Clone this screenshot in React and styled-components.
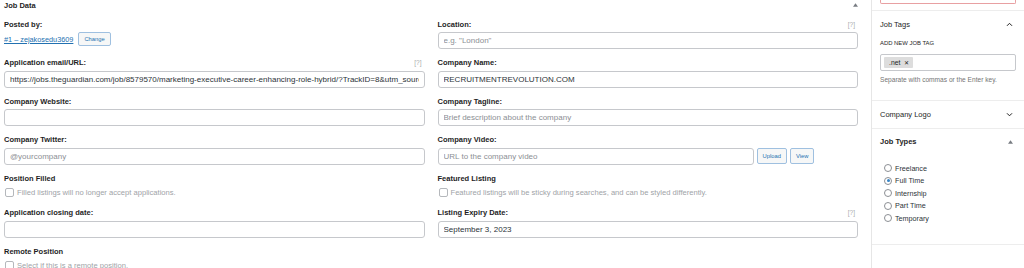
import styled, { createGlobalStyle } from "styled-components";

const GlobalStyle = createGlobalStyle`
  html, body {
    margin: 0;
    padding: 0;
    background: #ffffff;
    font-family: "Liberation Sans", Arial, sans-serif;
    color: #1e1e1e;
  }
  * { box-sizing: border-box; }
`;

const leftFields = [
  { kind: "posted", label: "Posted by:" },
  { kind: "input", label: "Application email/URL:", help: true, value: "https://jobs.theguardian.com/job/8579570/marketing-executive-career-enhancing-role-hybrid/?TrackID=8&utm_source=theguardian" },
  { kind: "input", label: "Company Website:" },
  { kind: "input", label: "Company Twitter:", placeholder: "@yourcompany" },
  { kind: "check", label: "Position Filled", text: "Filled listings will no longer accept applications." },
  { kind: "input", label: "Application closing date:" },
  { kind: "check", label: "Remote Position", text: "Select if this is a remote position." },
];

const rightFields = [
  { kind: "input", label: "Location:", help: true, placeholder: "e.g. \"London\"" },
  { kind: "input", label: "Company Name:", value: "RECRUITMENTREVOLUTION.COM" },
  { kind: "input", label: "Company Tagline:", placeholder: "Brief description about the company" },
  { kind: "video", label: "Company Video:", placeholder: "URL to the company video" },
  { kind: "check", label: "Featured Listing", text: "Featured listings will be sticky during searches, and can be styled differently." },
  { kind: "input", label: "Listing Expiry Date:", help: true, value: "September 3, 2023" },
];

// interleave so both columns share grid rows
const gridFields = [];
for (let i = 0; i < leftFields.length; i++) {
  gridFields.push({ ...leftFields[i], col: 1 });
  if (rightFields[i]) gridFields.push({ ...rightFields[i], col: 2 });
}

const jobTypes = [
  { name: "Freelance" },
  { name: "Full Time", checked: true },
  { name: "Internship" },
  { name: "Part Time" },
  { name: "Temporary" },
];

function Field({ field }) {
  return (
    <FieldBox $col={field.col}>
      <LabelRow>
        <Label>{field.label}</Label>
        {field.help && <Help>[?]</Help>}
      </LabelRow>
      {field.kind === "input" && (
        <TextInput readOnly value={field.value || ""} placeholder={field.placeholder || ""} />
      )}
      {field.kind === "posted" && (
        <ControlRow>
          <UserLink href="#">#1 – zejakosedu3609</UserLink>
          <SmallButton>Change</SmallButton>
        </ControlRow>
      )}
      {field.kind === "video" && (
        <ControlRow>
          <TextInput readOnly value="" placeholder={field.placeholder} $width="316px" />
          <SmallButton $tall>Upload</SmallButton>
          <SmallButton $tall>View</SmallButton>
        </ControlRow>
      )}
      {field.kind === "check" && (
        <CheckRow>
          <CheckBox />
          <CheckText>{field.text}</CheckText>
        </CheckRow>
      )}
    </FieldBox>
  );
}

const Caret = () => (
  <svg width="5" height="4" viewBox="0 0 5 4">
    <path d="M2.5 0.3 L5 3.7 L0 3.7 Z" fill="#787c82" />
  </svg>
);

const Chevron = ({ up }) => (
  <svg width="7" height="5" viewBox="0 0 7 5">
    <path d={up ? "M1 3.8 L3.5 1.3 L6 3.8" : "M1 1.3 L3.5 3.8 L6 1.3"} fill="none" stroke="#1e1e1e" strokeWidth="1" />
  </svg>
);

export default function App() {
  return (
    <>
      <GlobalStyle />
      <Page>
        <Main>
          <MainHeader>
            <MainTitle>Job Data</MainTitle>
            <Caret />
          </MainHeader>
          <FieldGrid>
            {gridFields.map((f) => <Field key={f.label} field={f} />)}
          </FieldGrid>
        </Main>
        <Sidebar>
          <ErrorBox />
          <Panel>
            <PanelHeader>
              <PanelTitle>Job Tags</PanelTitle>
              <Chevron up />
            </PanelHeader>
            <PanelBody>
              <TagLabel>Add new job tag</TagLabel>
              <TagInput>
                <Tag>.net <TagX>✕</TagX></Tag>
              </TagInput>
              <TagHelp>Separate with commas or the Enter key.</TagHelp>
            </PanelBody>
          </Panel>
          <Panel>
            <PanelHeader>
              <PanelTitle>Company Logo</PanelTitle>
              <Chevron />
            </PanelHeader>
          </Panel>
          <Panel>
            <PanelHeader $compact>
              <PanelTitle $bold>Job Types</PanelTitle>
              <Caret />
            </PanelHeader>
            <RadioList>
              {jobTypes.map((t) => (
                <RadioRow key={t.name}>
                  <Radio $checked={t.checked} />
                  <RadioText>{t.name}</RadioText>
                </RadioRow>
              ))}
            </RadioList>
          </Panel>
        </Sidebar>
      </Page>
    </>
  );
}

const Page = styled.div`
  display: flex;
  width: 1024px;
  height: 268px;
  overflow: hidden;
  background: #ffffff;
`;

const Main = styled.div`
  width: 872px;
  flex-shrink: 0;
  padding: 0 13px 0 4px;
  border-right: 1px solid #e6e6e6;
`;

const MainHeader = styled.div`
  display: flex;
  align-items: center;
  justify-content: space-between;
  height: 10px;
`;

const MainTitle = styled.span`
  font-size: 7.5px;
  font-weight: 700;
  color: #1e1e1e;
`;

const FieldGrid = styled.div`
  display: grid;
  grid-template-columns: 1fr 1fr;
  column-gap: 13px;
  row-gap: 8.5px;
  margin-top: 9px;
  align-items: start;
`;

const FieldBox = styled.div`
  grid-column: ${(p) => p.$col};
  display: flex;
  flex-direction: column;
  gap: 3px;
`;

const LabelRow = styled.div`
  display: flex;
  justify-content: space-between;
  align-items: center;
  height: 10px;
`;

const Label = styled.span`
  font-size: 7.5px;
  font-weight: 700;
  color: #1e1e1e;
`;

const Help = styled.span`
  font-size: 6.5px;
  color: #a7aaad;
  padding-right: 3px;
`;

const TextInput = styled.input`
  width: ${(p) => p.$width || "100%"};
  height: 17px;
  border: 1px solid #c6c8cc;
  border-radius: 3px;
  background: #ffffff;
  padding: 0 5px;
  font-family: inherit;
  font-size: 8px;
  color: #2c3338;
  outline: none;
  &::placeholder { color: #8c8f94; }
`;

const ControlRow = styled.div`
  display: flex;
  align-items: center;
  gap: 3px;
`;

const UserLink = styled.a`
  font-size: 7.3px;
  color: #2271b1;
  text-decoration: underline;
  margin-right: 2px;
`;

const SmallButton = styled.button`
  height: ${(p) => (p.$tall ? "16px" : "14px")};
  padding: 0 5px;
  border: 1px solid #9fc0e0;
  border-radius: 2px;
  background: #f6f7f7;
  color: #2271b1;
  font-family: inherit;
  font-size: 5.8px;
  cursor: pointer;
`;

const CheckRow = styled.div`
  display: flex;
  align-items: center;
  gap: 3px;
  height: 10px;
  margin-top: 1px;
  margin-bottom: 2px;
  padding-left: 1px;
`;

const CheckBox = styled.span`
  width: 9px;
  height: 9px;
  border: 1px solid #b5b8bc;
  border-radius: 2px;
`;

const CheckText = styled.span`
  font-size: 7.6px;
  color: #a0a3a7;
`;

const Sidebar = styled.div`
  flex: 1;
  display: flex;
  flex-direction: column;
`;

const ErrorBox = styled.div`
  margin: 0 8px 6px 8px;
  height: 4px;
  border: 1px solid #e8a0a2;
  border-top: none;
  border-radius: 0 0 2px 2px;
`;

const Panel = styled.div`
  border-top: 1px solid #ededed;
  &:last-child { border-bottom: 1px solid #ededed; }
`;

const PanelHeader = styled.div`
  display: flex;
  justify-content: space-between;
  align-items: center;
  height: ${(p) => (p.$compact ? "25px" : "27px")};
  padding: 0 11px 0 8px;
`;

const PanelTitle = styled.span`
  font-size: 7.5px;
  font-weight: ${(p) => (p.$bold ? 700 : 400)};
  color: #1e1e1e;
`;

const PanelBody = styled.div`
  padding: 1px 8px 16px 8px;
`;

const TagLabel = styled.div`
  font-size: 5.9px;
  text-transform: uppercase;
  color: #1e1e1e;
  height: 8px;
  line-height: 8px;
  margin-bottom: 7px;
`;

const TagInput = styled.div`
  display: flex;
  align-items: center;
  height: 17px;
  border: 1px solid #c6c8cc;
  border-radius: 2px;
  padding: 0 3px;
`;

const Tag = styled.span`
  display: inline-flex;
  align-items: center;
  gap: 4px;
  height: 11px;
  padding: 0 4px 0 5px;
  background: #dddddd;
  border-radius: 1px;
  font-size: 6.8px;
  color: #1e1e1e;
`;

const TagX = styled.span`
  font-size: 6px;
`;

const TagHelp = styled.div`
  font-size: 6.6px;
  line-height: 8px;
  color: #757575;
  margin-top: 5px;
`;

const RadioList = styled.div`
  display: flex;
  flex-direction: column;
  gap: 4.6px;
  padding: 10px 12px 22px 12px;
`;

const RadioRow = styled.div`
  display: flex;
  align-items: center;
  gap: 3px;
  height: 8px;
`;

const Radio = styled.span`
  position: relative;
  width: 8px;
  height: 8px;
  border-radius: 50%;
  border: 1px solid #8c8f94;
  background: #ffffff;
  &::after {
    content: "";
    display: ${(p) => (p.$checked ? "block" : "none")};
    position: absolute;
    left: 1.5px;
    top: 1.5px;
    width: 3px;
    height: 3px;
    border-radius: 50%;
    background: #3582c4;
  }
`;

const RadioText = styled.span`
  font-size: 7.2px;
  color: #2c3338;
`;
